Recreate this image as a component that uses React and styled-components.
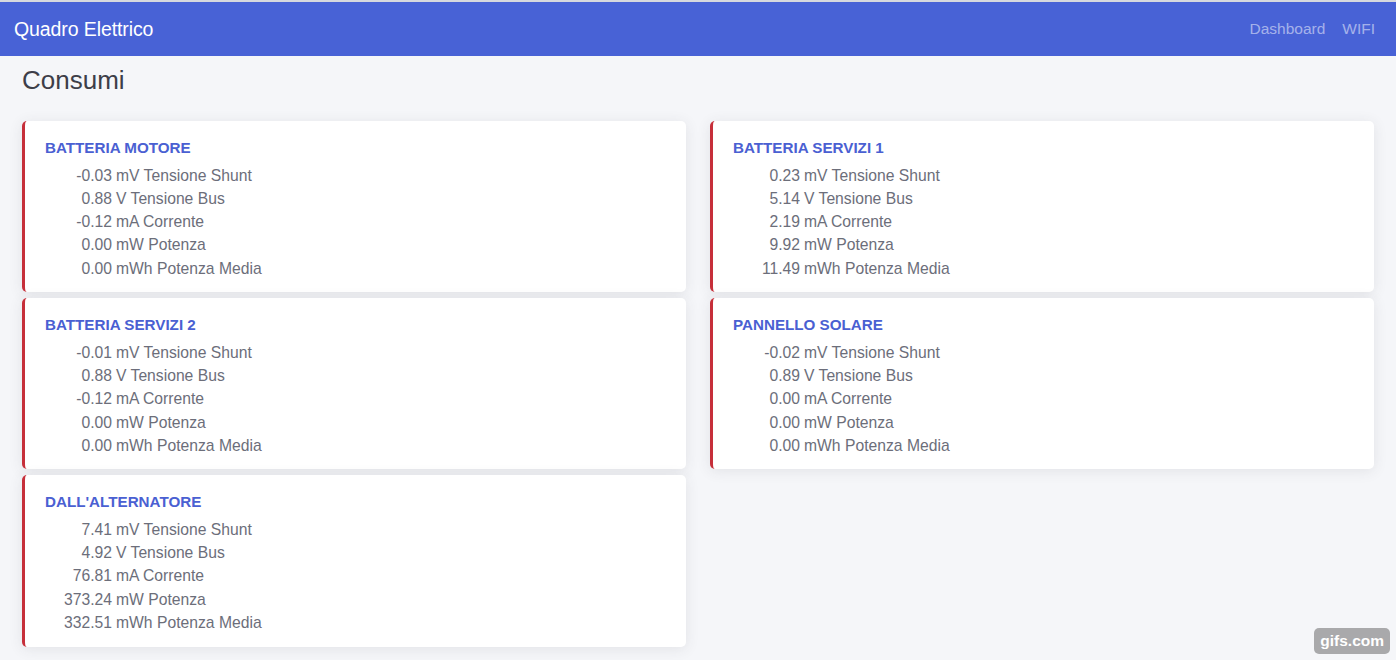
import React from "react";
import styled, { createGlobalStyle } from "styled-components";

const GlobalStyle = createGlobalStyle`
  html, body {
    margin: 0;
    padding: 0;
    background: #f5f6f9;
    font-family: "Liberation Sans", Arial, sans-serif;
  }
  * { box-sizing: border-box; }
`;

const Page = styled.div`
  min-height: 660px;
  border-top: 2px solid #d6d8de;
`;

const Navbar = styled.nav`
  height: 54px;
  background: #4862d6;
  display: flex;
  align-items: center;
  justify-content: space-between;
  padding: 0 21px 0 14px;
`;

const Brand = styled.div`
  color: #fff;
  font-size: 19.5px;
  letter-spacing: -0.1px;
`;

const NavLinks = styled.div`
  display: flex;
  gap: 17px;
`;

const NavLink = styled.a`
  color: rgba(255, 255, 255, 0.52);
  font-size: 15.5px;
  text-decoration: none;
`;

const Container = styled.main`
  padding: 0 22px;
`;

const Heading = styled.h1`
  margin: 9px 0 25px;
  font-size: 26px;
  line-height: 31px;
  font-weight: 400;
  color: #3d3e48;
`;

const Grid = styled.div`
  display: grid;
  grid-template-columns: 1fr 1fr;
  column-gap: 24px;
  align-items: start;
`;

const Column = styled.div`
  display: flex;
  flex-direction: column;
  gap: 6px;
`;

const Card = styled.div`
  background: #fff;
  border-left: 3px solid #c62f3a;
  border-radius: 5px;
  box-shadow: 0 2px 14px rgba(58, 59, 69, 0.1);
  padding: 17px 20px 12.2px 20px;
`;

const Title = styled.div`
  color: #4a60d2;
  font-size: 15.2px;
  font-weight: 700;
  line-height: 20px;
  margin-bottom: 5.5px;
  text-transform: uppercase;
`;

const Row = styled.div`
  display: flex;
  gap: 4px;
  font-size: 15.7px;
  line-height: 23.3px;
  color: #6c6e7a;
`;

const Value = styled.span`
  width: 67px;
  text-align: right;
`;

const Badge = styled.div`
  position: absolute;
  right: 6px;
  bottom: 6px;
  background: #a9a9ab;
  color: #fff;
  font-weight: 700;
  font-size: 15.5px;
  padding: 4px 6px 4px;
  border-radius: 5px;
`;

const labels = [
  ["mV", "Tensione Shunt"],
  ["V", "Tensione Bus"],
  ["mA", "Corrente"],
  ["mW", "Potenza"],
  ["mWh", "Potenza Media"],
];

const left = [
  { title: "Batteria Motore", values: ["-0.03", "0.88", "-0.12", "0.00", "0.00"] },
  { title: "Batteria Servizi 2", values: ["-0.01", "0.88", "-0.12", "0.00", "0.00"] },
  { title: "Dall'Alternatore", values: ["7.41", "4.92", "76.81", "373.24", "332.51"] },
];

const right = [
  { title: "Batteria Servizi 1", values: ["0.23", "5.14", "2.19", "9.92", "11.49"] },
  { title: "Pannello Solare", values: ["-0.02", "0.89", "0.00", "0.00", "0.00"] },
];

const SensorCard = ({ title, values }) => (
  <Card>
    <Title>{title}</Title>
    {values.map((v, i) => (
      <Row key={i}>
        <Value>{v}</Value>
        <span>
          {labels[i][0]} {labels[i][1]}
        </span>
      </Row>
    ))}
  </Card>
);

export default function App() {
  return (
    <Page>
      <GlobalStyle />
      <Navbar>
        <Brand>Quadro Elettrico</Brand>
        <NavLinks>
          <NavLink href="#">Dashboard</NavLink>
          <NavLink href="#">WIFI</NavLink>
        </NavLinks>
      </Navbar>
      <Container>
        <Heading>Consumi</Heading>
        <Grid>
          <Column>
            {left.map((c) => (
              <SensorCard key={c.title} {...c} />
            ))}
          </Column>
          <Column>
            {right.map((c) => (
              <SensorCard key={c.title} {...c} />
            ))}
          </Column>
        </Grid>
      </Container>
      <Badge>gifs.com</Badge>
    </Page>
  );
}
